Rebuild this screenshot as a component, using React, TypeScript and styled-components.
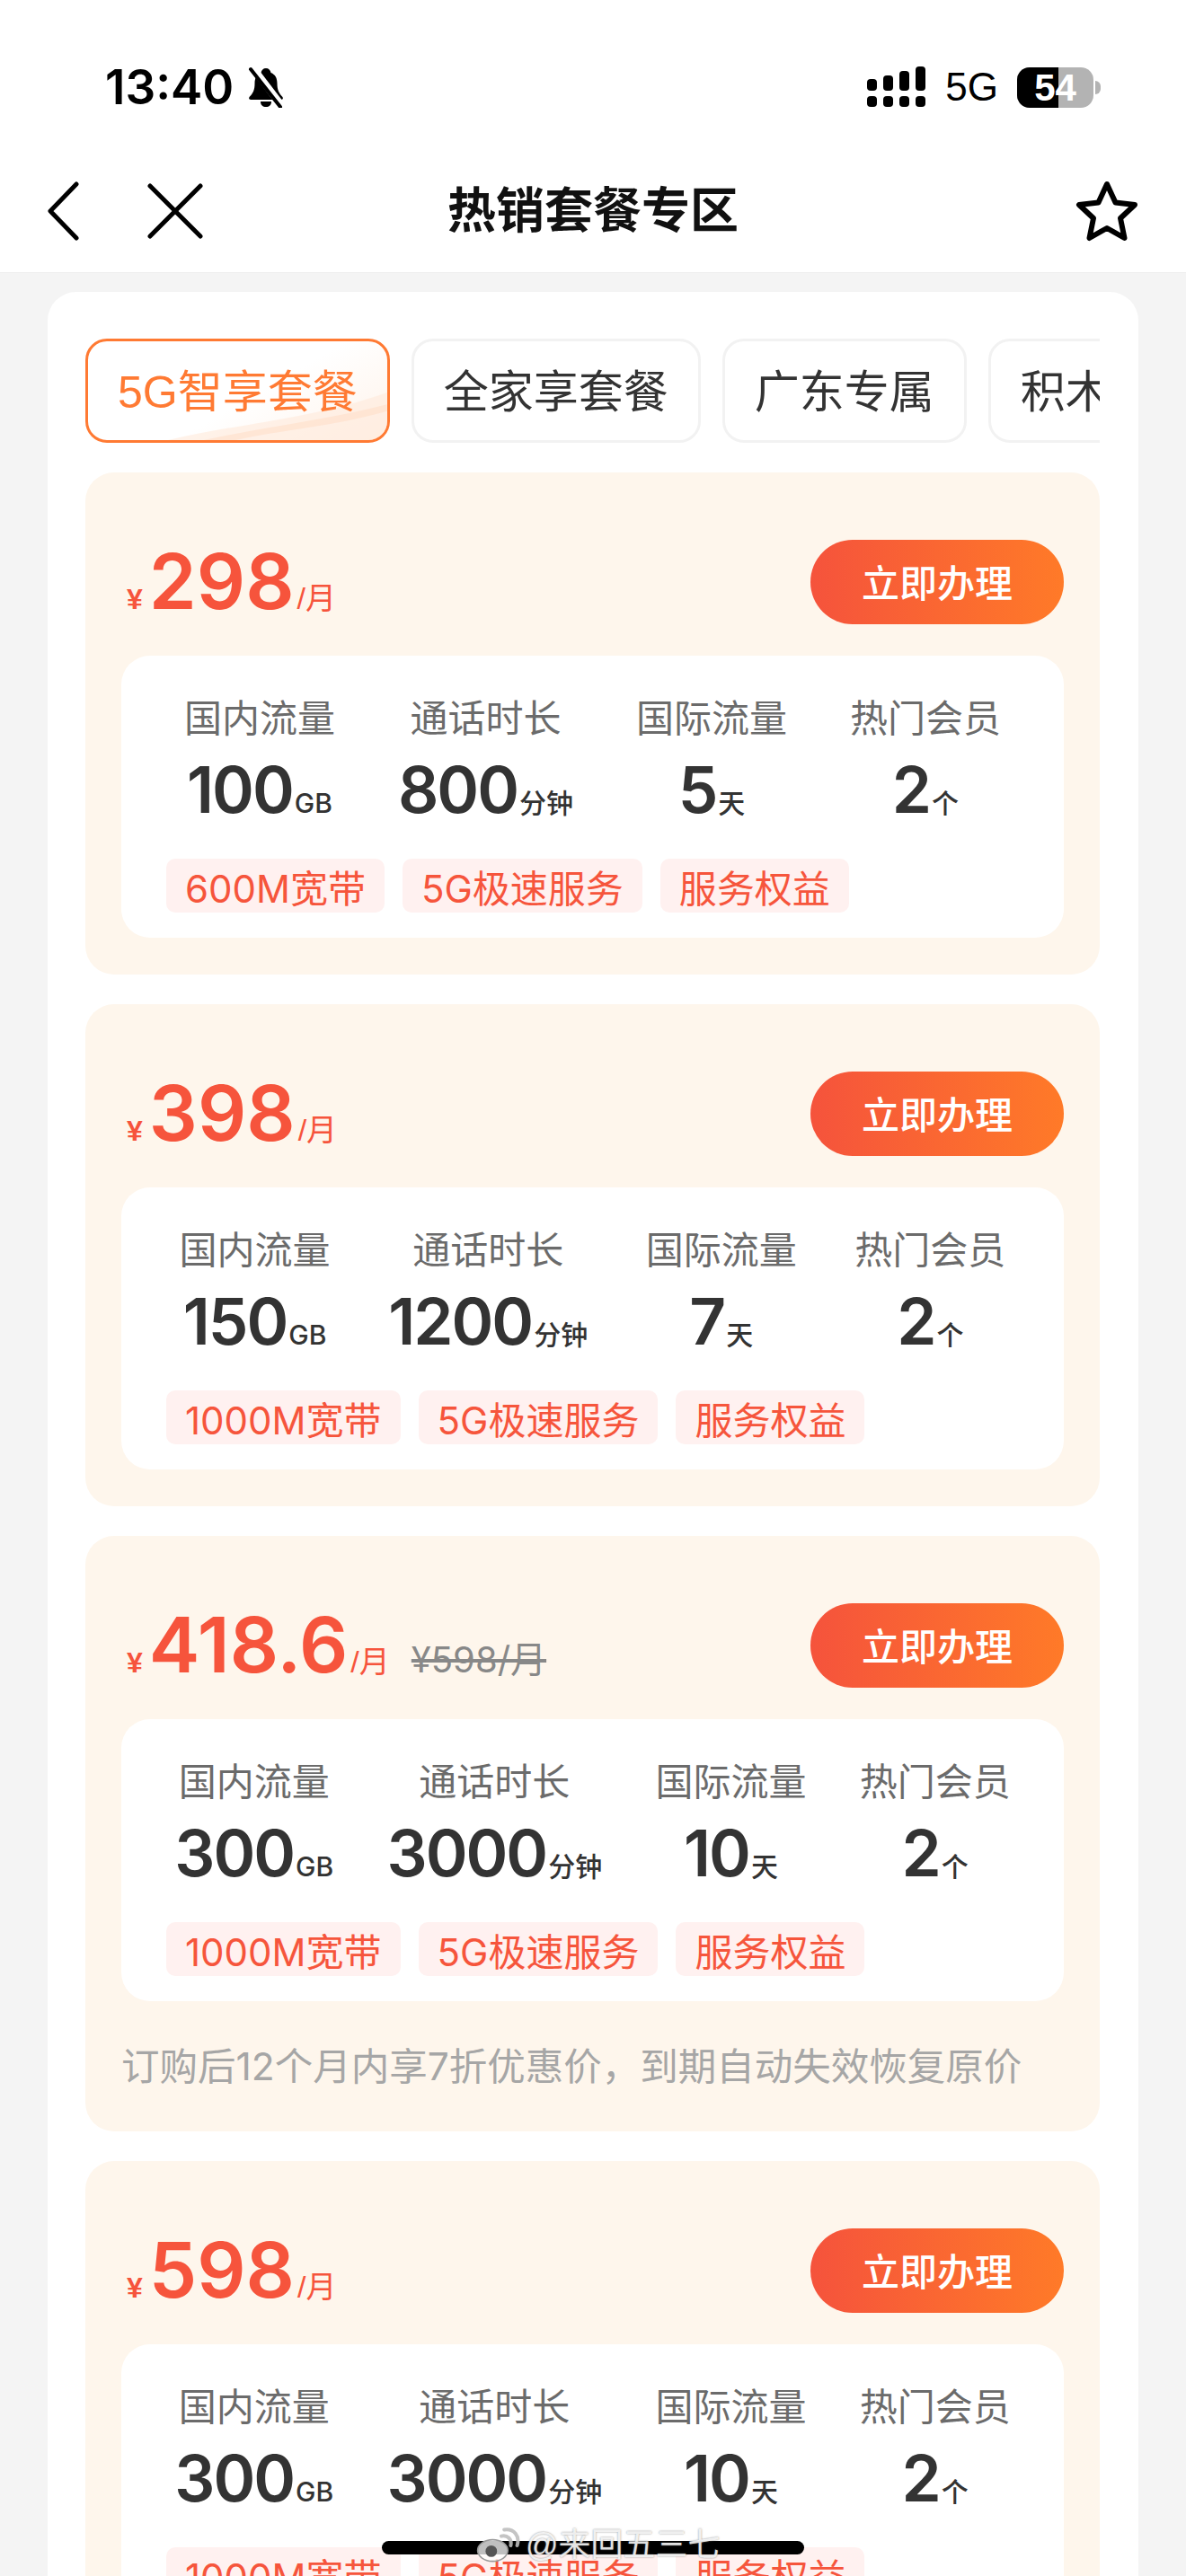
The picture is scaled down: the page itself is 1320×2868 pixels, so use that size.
import styled, { createGlobalStyle } from "styled-components";

const LATIN = `"Liberation Sans", "Noto Sans CJK SC", sans-serif`;
const DIGITS = `Inter, "Noto Sans CJK SC", sans-serif`;

const tabs = ["5G智享套餐", "全家享套餐", "广东专属", "积木套餐"];

type Plan = {
  price: string;
  oldPrice?: string;
  note?: string;
  stats: [string, string][];
  tags: string[];
};

const plans: Plan[] = [
  {
    price: "298",
    stats: [["100", "GB"], ["800", "分钟"], ["5", "天"], ["2", "个"]],
    tags: ["600M宽带", "5G极速服务", "服务权益"],
  },
  {
    price: "398",
    stats: [["150", "GB"], ["1200", "分钟"], ["7", "天"], ["2", "个"]],
    tags: ["1000M宽带", "5G极速服务", "服务权益"],
  },
  {
    price: "418.6",
    oldPrice: "¥598/月",
    note: "订购后12个月内享7折优惠价，到期自动失效恢复原价",
    stats: [["300", "GB"], ["3000", "分钟"], ["10", "天"], ["2", "个"]],
    tags: ["1000M宽带", "5G极速服务", "服务权益"],
  },
  {
    price: "598",
    stats: [["300", "GB"], ["3000", "分钟"], ["10", "天"], ["2", "个"]],
    tags: ["1000M宽带", "5G极速服务", "服务权益"],
  },
];

const labels = ["国内流量", "通话时长", "国际流量", "热门会员"];

export default function App() {
  return (
    <Page>
      <GlobalStyle />
      <TopBar>
        <StatusBar>
          <TimeGroup>
            <Time>13:40</Time>
            <svg width="44" height="46" viewBox="0 0 44 46">
              <path d="M22 2c-3 0-5 2-5.500 5-5 2-7 6-7 12 0 7-2 11-6 15-1 2 0 3 2 3h33c2 0 3-1 2-3-4-4-6-8-6-15 0-6-2-10-7-12-.5-3-2.500-5-5.500-5z" fill="#000" />
              <path d="M16 39h12c0 4-2.500 6-6 6s-6-2-6-6z" fill="#000" />
              <path d="M7 1l32 42" stroke="#fff" strokeWidth="8" />
              <path d="M5 3l33 42" stroke="#000" strokeWidth="4" strokeLinecap="round" />
            </svg>
          </TimeGroup>
          <StatusRight>
            <svg width="66" height="46" viewBox="0 0 66 46">
              <rect x="0" y="14" width="11" height="13" rx="4" />
              <rect x="18" y="10" width="11" height="17" rx="4" />
              <rect x="36" y="5" width="11" height="22" rx="4" />
              <rect x="54" y="0" width="11" height="27" rx="4" />
              <rect x="0" y="33" width="11" height="12" rx="4" />
              <rect x="18" y="33" width="11" height="12" rx="4" />
              <rect x="36" y="33" width="11" height="12" rx="4" />
              <rect x="54" y="33" width="11" height="12" rx="4" />
            </svg>
            <NetworkLabel>5G</NetworkLabel>
            <Battery>
              <BatteryFill />
              <BatteryText>54</BatteryText>
              <BatteryNub />
            </Battery>
          </StatusRight>
        </StatusBar>
        <NavBar>
          <NavSide>
            <svg width="36" height="66" viewBox="0 0 36 66" fill="none" stroke="#000" strokeWidth="5" strokeLinecap="round" strokeLinejoin="round">
              <path d="M33 3L4 33l29 30" />
            </svg>
            <svg width="62" height="62" viewBox="0 0 62 62" fill="none" stroke="#000" strokeWidth="5" strokeLinecap="round">
              <path d="M3 3l56 56M59 3L3 59" />
            </svg>
          </NavSide>
          <NavTitle>热销套餐专区</NavTitle>
          <StarButton>
            <svg width="70" height="68" viewBox="0 0 70 68" fill="none" stroke="#000" strokeWidth="6" strokeLinejoin="round">
              <path d="M35 4l9.500 20.500L66 27 50 42l4.500 22L35 53 15.500 64 20 42 4 27l21.500-2.500z" />
            </svg>
          </StarButton>
        </NavBar>
      </TopBar>

      <MainCard>
        <TabRow>
          {tabs.map((tab, index) => (
            <Tab key={tab} $active={index === 0}>
              {index === 0 && (
                <TabWave viewBox="0 0 336 116" preserveAspectRatio="none">
                  <path d="M90 116C170 96 250 92 336 60v56z" fill="#ffeadb" opacity="0.6" />
                  <path d="M130 116c70-16 140-24 206-42v8c-60 18-120 22-170 34z" fill="#ffdcc4" opacity="0.5" />
                </TabWave>
              )}
              <TabText>{tab}</TabText>
            </Tab>
          ))}
        </TabRow>

        <PlanList>
          {plans.map((plan) => (
            <PlanCard key={plan.price}>
              <PlanHead>
                <PriceGroup>
                  <Yen>¥</Yen>
                  <PriceValue>{plan.price}</PriceValue>
                  <PerMonth>/月</PerMonth>
                  {plan.oldPrice && <OldPrice>{plan.oldPrice}</OldPrice>}
                </PriceGroup>
                <BuyButton>立即办理</BuyButton>
              </PlanHead>
              <Details>
                <StatRow>
                  {plan.stats.map(([value, unit], index) => (
                    <Stat key={labels[index]}>
                      <StatLabel>{labels[index]}</StatLabel>
                      <StatValue>
                        {value}
                        <StatUnit>{unit}</StatUnit>
                      </StatValue>
                    </Stat>
                  ))}
                </StatRow>
                <TagRow>
                  {plan.tags.map((tag) => (
                    <Tag key={tag}>{tag}</Tag>
                  ))}
                </TagRow>
              </Details>
              {plan.note && <PlanNote>{plan.note}</PlanNote>}
            </PlanCard>
          ))}
        </PlanList>
      </MainCard>

      <HomeIndicator />
      <Watermark>
        <svg width="50" height="40" viewBox="0 0 62 50" fill="none">
          <ellipse cx="24" cy="32" rx="21" ry="15" fill="rgba(255,255,255,0.75)" stroke="#9a9a9a" strokeWidth="2" />
          <circle cx="22" cy="33" r="8" fill="#555" />
          <path d="M36 12c8-2 15 4 13 13M40 3c14-2 22 9 18 22" stroke="rgba(190,190,190,0.9)" strokeWidth="5" strokeLinecap="round" />
        </svg>
        <WatermarkText>@来回五三七</WatermarkText>
      </Watermark>
    </Page>
  );
}

const GlobalStyle = createGlobalStyle`
  html, body {
    margin: 0;
    padding: 0;
    height: 2868px;
    overflow: hidden;
    background: #f4f4f4;
  }

  * {
    box-sizing: border-box;
  }
`;

const Page = styled.div`
  position: relative;
  width: 1320px;
  height: 2868px;
  overflow: hidden;
  background: #f4f4f4;
  font-family: ${LATIN};
`;

const TopBar = styled.header`
  background: #fff;
  height: 304px;
  border-bottom: 1px solid #eeeeee;
`;

const StatusBar = styled.div`
  height: 170px;
  padding: 74px 103px 0 117px;
  display: flex;
  justify-content: space-between;
  align-items: flex-start;
`;

const TimeGroup = styled.div`
  display: flex;
  align-items: center;
  gap: 14px;
  height: 46px;
`;

const Time = styled.span`
  font-family: ${DIGITS};
  font-size: 53px;
  font-weight: 600;
  line-height: 46px;
  color: #000;
`;

const StatusRight = styled.div`
  display: flex;
  align-items: center;
  height: 46px;
`;

const NetworkLabel = styled.span`
  margin-left: 21px;
  font-size: 44px;
  line-height: 46px;
  color: #000;
`;

const Battery = styled.div`
  position: relative;
  margin-left: 21px;
  width: 85px;
  height: 45px;
  border-radius: 14px;
  background: #b3b3b3;
  display: flex;
  align-items: center;
  justify-content: center;
`;

const BatteryFill = styled.div`
  position: absolute;
  left: 0;
  top: 0;
  bottom: 0;
  width: 46px;
  background: #000;
  border-radius: 14px 0 0 14px;
`;

const BatteryText = styled.span`
  position: relative;
  font-size: 42px;
  font-weight: 700;
  color: #fff;
  line-height: 45px;
`;

const BatteryNub = styled.div`
  position: absolute;
  right: -8px;
  top: 15px;
  width: 6px;
  height: 15px;
  border-radius: 0 6px 6px 0;
  background: #b3b3b3;
`;

const NavBar = styled.nav`
  position: relative;
  height: 133px;
  padding: 0 53px 3px 52px;
  display: flex;
  align-items: center;
  justify-content: space-between;
`;

const NavSide = styled.div`
  display: flex;
  align-items: center;
  gap: 76px;
`;

const NavTitle = styled.h1`
  position: absolute;
  left: 0;
  right: 0;
  top: 30px;
  margin: 0;
  text-align: center;
  font-size: 54px;
  line-height: 70px;
  font-weight: 700;
  color: #111;
  pointer-events: none;
`;

const StarButton = styled.div`
  display: flex;
`;

const MainCard = styled.main`
  margin: 21px 53px 0;
  padding: 52px 43px 0 42px;
  background: #fff;
  border-radius: 32px 32px 0 0;
`;

const TabRow = styled.div`
  display: flex;
  gap: 24px;
  overflow: hidden;
`;

const Tab = styled.div<{ $active: boolean }>`
  position: relative;
  flex: none;
  height: 116px;
  padding: 4px 33px 0;
  display: flex;
  align-items: center;
  overflow: hidden;
  border-radius: 24px;
  border: 3px solid ${(p) => (p.$active ? "#ff7a33" : "#f2f2f2")};
  background: ${(p) =>
    p.$active ? "linear-gradient(150deg, #ffffff 55%, #fff3ea 100%)" : "#fff"};
  color: ${(p) => (p.$active ? "#ff7a33" : "#333")};
`;

const TabWave = styled.svg`
  position: absolute;
  inset: 0;
  width: 100%;
  height: 100%;
`;

const TabText = styled.span`
  position: relative;
  font-size: 50px;
  line-height: 60px;
  white-space: nowrap;
`;

const PlanList = styled.div`
  margin-top: 33px;
  display: flex;
  flex-direction: column;
  gap: 33px;
`;

const PlanCard = styled.section`
  padding: 75px 40px 41px 40px;
  background: #fef6ec;
  border-radius: 32px;
`;

const PlanHead = styled.div`
  height: 94px;
  margin-bottom: 35px;
  display: flex;
  align-items: center;
  justify-content: space-between;
`;

const PriceGroup = styled.div`
  display: flex;
  align-items: baseline;
  margin-left: 6px;
  color: #f6543c;
`;

const Yen = styled.span`
  font-size: 32px;
  font-weight: 700;
  margin-right: 7px;
`;

const PriceValue = styled.span`
  font-family: ${DIGITS};
  font-size: 85px;
  font-weight: 600;
  line-height: 94px;
`;

const PerMonth = styled.span`
  margin-left: 3px;
  font-size: 34px;
`;

const OldPrice = styled.span`
  margin-left: 24px;
  font-family: ${DIGITS};
  font-size: 40px;
  color: #888;
  text-decoration: line-through;
`;

const BuyButton = styled.button`
  width: 282px;
  height: 94px;
  padding: 0 0 3px;
  border: none;
  border-radius: 47px;
  background: linear-gradient(90deg, #f5533c, #ff7a28);
  color: #fff;
  font-family: inherit;
  font-size: 42px;
  font-weight: 500;
`;

const Details = styled.div`
  padding: 43px 0 28px;
  background: #fff;
  border-radius: 32px;
`;

const StatRow = styled.div`
  display: flex;
  justify-content: space-evenly;
`;

const Stat = styled.div`
  display: flex;
  flex-direction: column;
  align-items: center;
`;

const StatLabel = styled.div`
  font-size: 42px;
  line-height: 56px;
  color: #6b6b6b;
  white-space: nowrap;
`;

const StatValue = styled.div`
  margin-top: 12px;
  font-family: ${DIGITS};
  font-size: 71px;
  font-weight: 600;
  letter-spacing: -2px;
  line-height: 76px;
  color: #333;
  white-space: nowrap;
`;

const StatUnit = styled.span`
  margin-left: 2px;
  font-size: 30px;
  font-weight: 500;
  letter-spacing: 0;
  line-height: 1;
`;

const TagRow = styled.div`
  margin-top: 39px;
  padding-left: 50px;
  display: flex;
  gap: 20px;
`;

const Tag = styled.span`
  height: 60px;
  padding: 0 21px;
  display: flex;
  align-items: center;
  border-radius: 10px;
  background: #fff1f0;
  color: #f6553c;
  font-family: ${DIGITS};
  font-size: 42px;
  white-space: nowrap;
`;

const PlanNote = styled.p`
  margin: 46px 0 4px;
  font-family: ${DIGITS};
  font-size: 42.5px;
  line-height: 54px;
  color: #a6a6a6;
  white-space: nowrap;
`;

const HomeIndicator = styled.div`
  position: absolute;
  left: 425px;
  top: 2829px;
  width: 470px;
  height: 15px;
  border-radius: 8px;
  background: #000;
`;

const Watermark = styled.div`
  position: absolute;
  left: 529px;
  top: 2812px;
  display: flex;
  align-items: center;
  gap: 6px;
`;

const WatermarkText = styled.span`
  font-size: 36px;
  line-height: 44px;
  color: rgba(255, 255, 255, 0.85);
  text-shadow: 0 0 2px rgba(110, 110, 110, 0.8);
  white-space: nowrap;
`;
